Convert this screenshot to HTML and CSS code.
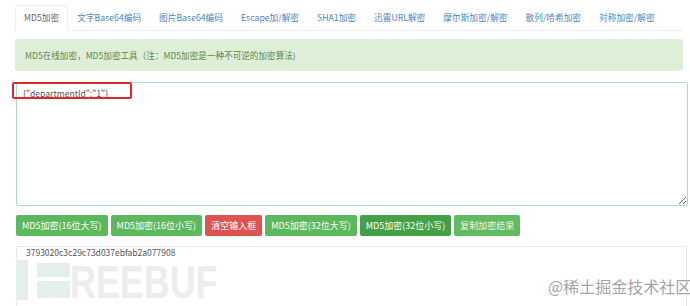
FILE: index.html
```html
<!DOCTYPE html>
<html lang="zh-CN">
<head>
  <meta charset="UTF-8" />
  <title>MD5加密</title>
  <link rel="stylesheet" href="styles.css">
</head>
<body>
  <div class="page">
    <ul class="tabs">
      <li class="active"><a>MD5加密</a></li>
      <li><a>文字Base64编码</a></li>
      <li><a>图片Base64编码</a></li>
      <li><a>Escape加/解密</a></li>
      <li><a>SHA1加密</a></li>
      <li><a>迅雷URL解密</a></li>
      <li><a>摩尔斯加密/解密</a></li>
      <li><a>散列/哈希加密</a></li>
      <li><a>对称加密/解密</a></li>
    </ul>

    <div class="alert">MD5在线加密，MD5加密工具（注：MD5加密是一种不可逆的加密算法)</div>

    <div class="editor">
      <textarea class="input">{"departmentId":"1"}</textarea>
      <span class="mark"></span>
    </div>

    <div class="buttons">
      <button class="btn">MD5加密(16位大写)</button>
      <button class="btn">MD5加密(16位小写)</button>
      <button class="btn btn-red">清空输入框</button>
      <button class="btn">MD5加密(32位大写)</button>
      <button class="btn btn-dark">MD5加密(32位小写)</button>
      <button class="btn btn-light">复制加密结果</button>
    </div>

    <div class="result">3793020c3c29c73d037ebfab2a077908</div>
  </div>

  <div class="wm-logo">
    <svg class="wm-mark" width="56" height="40" viewBox="0 0 56 40">
      <rect x="0" y="0" width="12" height="40" fill="#e4eeea"/>
      <rect x="21" y="3" width="33" height="14" fill="#e4eeea"/>
      <rect x="21" y="21" width="33" height="17" fill="#e4eeea"/>
    </svg>
    <span class="wm-text">REEBUF</span>
  </div>
  <div class="wm-site">@稀土掘金技术社区</div>
</body>
</html>
```

FILE: styles.css
```css
body {
  margin: 0;
  font-family: "Noto Sans CJK SC", "Liberation Sans", sans-serif;
  background: #fff;
  color: #555;
  overflow: hidden;
}

.page {
  padding: 5px 3px 0 15px;
}

.tabs {
  display: flex;
  list-style: none;
  margin: 0 4px 0 0;
  padding: 0;
  border-bottom: 1px solid #eceeee;
  white-space: nowrap;
}

.tabs li {
  margin-bottom: -1px;
}

.tabs a {
  display: block;
  padding: 5px 8px;
  font-size: 8.7px;
  line-height: 14px;
  color: #4a86c0;
  border: 1px solid transparent;
  border-radius: 3px 3px 0 0;
}

.tabs .active a {
  color: #666;
  background: #fff;
  border-color: #eceeee #eceeee transparent;
}

.alert {
  margin: 8px 4px 0 0;
  padding: 9px 10px;
  font-size: 8.6px;
  line-height: 14px;
  color: #5a8a4e;
  background: #dfeed6;
  border-radius: 3px;
  white-space: nowrap;
}

.editor {
  position: relative;
  margin-top: 11px;
}

.input {
  display: block;
  box-sizing: border-box;
  width: 672px;
  height: 124px;
  margin: 0 0 0 1px;
  padding: 3px 6px;
  font-family: "Noto Sans CJK SC", "Liberation Sans", sans-serif;
  font-size: 8.6px;
  line-height: 14px;
  color: #555;
  border: 1px solid #a8dcc7;
  border-radius: 2px;
  outline: none;
}

.mark {
  position: absolute;
  left: -3px;
  top: 0;
  width: 116px;
  height: 13px;
  border: 2px solid #e0282a;
  border-radius: 2px;
}

.buttons {
  display: flex;
  gap: 3px;
  margin: 9px 0 0 1px;
  white-space: nowrap;
}

.btn {
  height: 21px;
  padding: 0 6px;
  font-family: "Noto Sans CJK SC", "Liberation Sans", sans-serif;
  font-size: 9px;
  color: #fff;
  background: #5cb85c;
  border: none;
  border-radius: 2px;
}

.btn-red {
  background: #de5350;
}

.btn-dark {
  background: #43a047;
}

.btn-light {
  background: #62bb62;
  color: #eaf6ea;
}

.result {
  box-sizing: border-box;
  height: 70px;
  margin: 10px 0 0 1px;
  width: 671px;
  padding: 0 9px;
  font-size: 8.5px;
  line-height: 11px;
  color: #555;
  border: 1px solid #e8e8e8;
  border-bottom: none;
}

.wm-logo {
  position: absolute;
  left: 16px;
  top: 260px;
  display: flex;
  align-items: flex-end;
}

.wm-mark {
  margin-bottom: 2px;
}

.wm-text {
  display: inline-block;
  margin-left: -2px;
  font-family: "Liberation Sans", sans-serif;
  font-weight: bold;
  font-size: 46px;
  line-height: 40px;
  color: #ededed;
  transform: scaleX(0.78);
  transform-origin: left bottom;
}

.wm-site {
  position: absolute;
  left: 548px;
  top: 275px;
  font-size: 16px;
  line-height: 22px;
  color: #a5a5a5;
  white-space: nowrap;
}
```
